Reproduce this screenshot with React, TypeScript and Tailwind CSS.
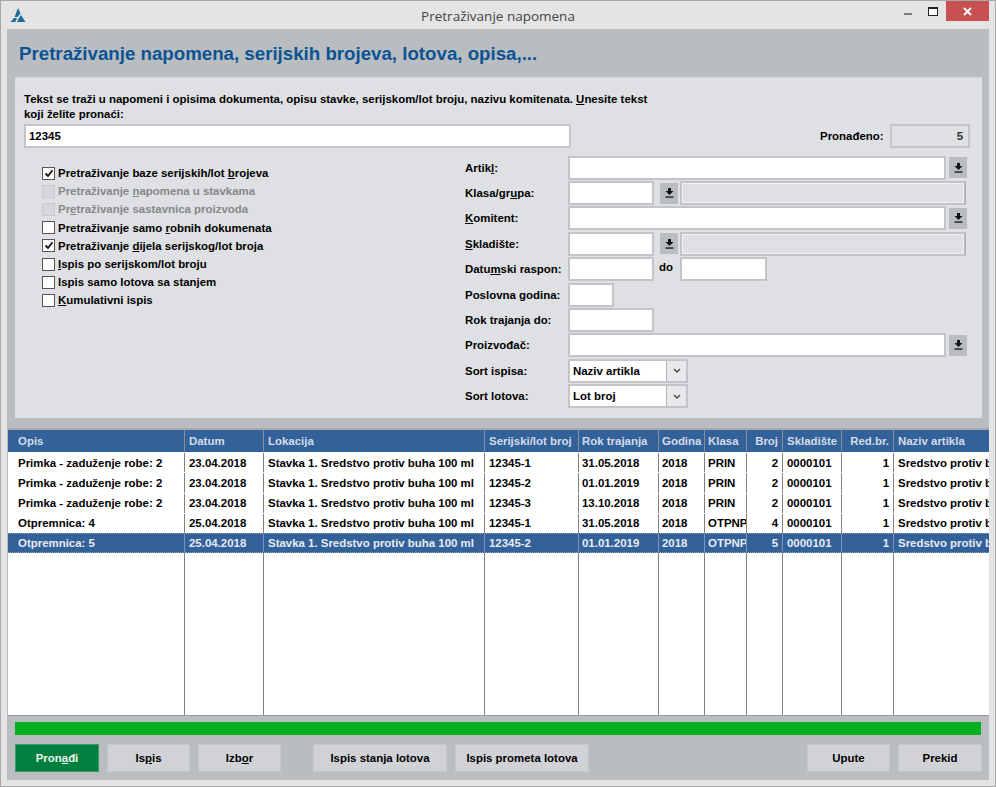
import { ReactNode } from "react";

const columns = [
  { label: "Opis", width: "w-[177px]", pad: "pl-[10px]" },
  { label: "Datum", width: "w-[79px]", pad: "pl-[4px]" },
  { label: "Lokacija", width: "w-[221px]", pad: "pl-[4px]" },
  { label: "Serijski/lot broj", width: "w-[94px]", pad: "pl-[4px]" },
  { label: "Rok trajanja", width: "w-[80px]", pad: "pl-[3px]" },
  { label: "Godina", width: "w-[46px]", pad: "pl-[3px]" },
  { label: "Klasa", width: "w-[42px]", pad: "pl-[3px]" },
  { label: "Broj", width: "w-[36px]", pad: "pr-[4px] justify-end" },
  { label: "Skladište", width: "w-[59px]", pad: "pl-[4px]" },
  { label: "Red.br.", width: "w-[52px]", pad: "pr-[4px] justify-end" },
  { label: "Naziv artikla", width: "w-[95px]", pad: "pl-[4px]" },
];

const rows = [
  ["Primka - zaduženje robe: 2", "23.04.2018", "Stavka 1. Sredstvo protiv buha 100 ml", "12345-1", "31.05.2018", "2018", "PRIN", "2", "0000101", "1", "Sredstvo protiv buha 100 ml"],
  ["Primka - zaduženje robe: 2", "23.04.2018", "Stavka 1. Sredstvo protiv buha 100 ml", "12345-2", "01.01.2019", "2018", "PRIN", "2", "0000101", "1", "Sredstvo protiv buha 100 ml"],
  ["Primka - zaduženje robe: 2", "23.04.2018", "Stavka 1. Sredstvo protiv buha 100 ml", "12345-3", "13.10.2018", "2018", "PRIN", "2", "0000101", "1", "Sredstvo protiv buha 100 ml"],
  ["Otpremnica: 4", "25.04.2018", "Stavka 1. Sredstvo protiv buha 100 ml", "12345-1", "31.05.2018", "2018", "OTPNP", "4", "0000101", "1", "Sredstvo protiv buha 100 ml"],
  ["Otpremnica: 5", "25.04.2018", "Stavka 1. Sredstvo protiv buha 100 ml", "12345-2", "01.01.2019", "2018", "OTPNP", "5", "0000101", "1", "Sredstvo protiv buha 100 ml"],
];

function Logo() {
  return (
    <svg width="16" height="15" viewBox="0 0 16 15">
      <path d="M8 0 L10.5 5.5 L7.5 9 L4.6 9 Z" fill="#1a6a9a" />
      <path d="M4 10 L7 10 L5.2 14 L0.5 14 Z" fill="#1a6a9a" />
      <path d="M11 7 L15.5 14 L7 14 L8.6 10.5 Z" fill="#1a6a9a" />
    </svg>
  );
}

function PickIcon() {
  return (
    <svg width="9" height="10" viewBox="0 0 9 10">
      <path d="M3 0 H6 V3 H8.5 L4.5 7 L0.5 3 H3 Z" fill="#111" />
      <rect x="0.5" y="8.4" width="8" height="1.3" fill="#111" />
    </svg>
  );
}

function PickButton() {
  return (
    <div className="flex h-[21px] w-[18px] shrink-0 items-center justify-center bg-[#b9bdc0]">
      <PickIcon />
    </div>
  );
}

function Field({ width }: { width: string }) {
  return <input readOnly className={`h-[24px] shrink-0 border-2 border-[#c2c4c8] bg-white outline-none ${width}`} />;
}

function ReadOnlyField() {
  return <div className="h-[24px] w-[286px] shrink-0 border-2 border-[#c2c4c8] border-r-[#b4b6ba] bg-[#dfe0e3] shadow-[inset_0_0_0_1px_#f2f2f4]" />;
}

function SelectBox({ value }: { value: string }) {
  return (
    <div className="flex h-[24px] w-[120px] border-2 border-[#c2c4c8] bg-white">
      <span className="flex-1 pl-[3px] leading-[20px] text-black">{value}</span>
      <span className="flex w-[20px] items-center justify-center border-l border-[#b0b2b6] bg-[#e8e9eb]">
        <svg width="8" height="5" viewBox="0 0 8 5">
          <path d="M1 1 L4 4 L7 1" fill="none" stroke="#444" strokeWidth="1.4" />
        </svg>
      </span>
    </div>
  );
}

function FormRow({ label, children }: { label: ReactNode; children: ReactNode }) {
  return (
    <div className="flex h-[25.4px] items-center">
      <label className="w-[103px] shrink-0 whitespace-nowrap text-black">{label}</label>
      <div className="flex items-center">{children}</div>
    </div>
  );
}

function CheckRow({ checked, disabled, children }: { checked?: boolean; disabled?: boolean; children: ReactNode }) {
  return (
    <div className={`flex h-[18.2px] items-center gap-[3px] ${disabled ? "text-[#85878a]" : "text-black"}`}>
      <span
        className={`flex h-[13px] w-[13px] items-center justify-center border ${
          disabled ? "border-[#c8c9cc] bg-[#d6d7da]" : "border-[#555] bg-white"
        }`}
      >
        {checked && (
          <svg width="10" height="9" viewBox="0 0 10 9">
            <path d="M1.5 4.5 L4 7 L8.5 1.2" fill="none" stroke="#111" strokeWidth="1.8" />
          </svg>
        )}
      </span>
      <span className="whitespace-nowrap">{children}</span>
    </div>
  );
}

function FooterButton({ width, primary, children }: { width: string; primary?: boolean; children: ReactNode }) {
  return (
    <button
      className={`h-[28px] shrink-0 border text-center ${width} ${
        primary ? "border-[#3a9a68] bg-[#008040] text-[#e8f4ec]" : "border-[#c4c6ca] bg-[#d0d2d6] text-black"
      }`}
    >
      {children}
    </button>
  );
}

export default function App() {
  return (
    <div className="flex h-[787px] w-[996px] flex-col overflow-hidden border border-[#a8a8a8] bg-[#e4e4e4] text-[11.45px] font-bold leading-[14px] font-['Liberation_Sans',Arial,sans-serif]">
      {/* title bar */}
      <div className="flex h-[28px] shrink-0 items-start">
        <div className="w-[91px] shrink-0 pt-[7px] pl-[9px]">
          <Logo />
        </div>
        <div className="flex-1 pt-[6px] text-center font-['Open_Sans',sans-serif] text-[13.5px] leading-[18px] font-normal text-[#444]">
          Pretraživanje napomena
        </div>
        <div className="flex w-[91px] shrink-0 items-start pr-[6px]">
          <div className="mt-[12px] mr-[16px] h-[2px] w-[8px] bg-[#7c7c7c]" />
          <div className="mt-[6px] mr-[8px] h-[9px] w-[10px] border border-t-2 border-[#222] bg-white" />
          <div className="flex h-[20px] w-[43px] items-center justify-center bg-[#c75050]">
            <svg width="9" height="9" viewBox="0 0 9 9">
              <path d="M1 1 L8 8 M8 1 L1 8" stroke="#fff" strokeWidth="1.8" />
            </svg>
          </div>
        </div>
      </div>

      {/* content */}
      <div className="mx-[6px] flex h-[751px] w-[982px] flex-col bg-[#b9bdc0]">
        <h1 className="flex h-[48px] shrink-0 items-center pt-[2px] pl-[12px] text-[18.7px] font-bold text-[#0b5394]">
          Pretraživanje napomena, serijskih brojeva, lotova, opisa,...
        </h1>

        <div className="mr-[7px] ml-[8px] h-[341px] shrink-0 border-t border-[#d6d8da] bg-[#dfe0e3] pt-[14px] pl-[9px]">
          <p className="w-[630px] leading-[15px] text-black">
            Tekst se traži u napomeni i opisima dokumenta, opisu stavke, serijskom/lot broju, nazivu komitenata. <u>U</u>nesite tekst koji želite pronaći:
          </p>
          <div className="mt-[2px] flex items-center">
            <input
              readOnly
              value="12345"
              className="h-[24px] w-[547px] border-2 border-[#c2c4c8] bg-white pl-[3px] font-bold text-black outline-none"
            />
            <span className="ml-[249px] w-[70px] text-black">Pronađeno:</span>
            <div className="h-[24px] w-[80px] border-2 border-[#c2c4c8] bg-[#dfe0e3] pr-[5px] text-right leading-[20px] text-[#333]">5</div>
          </div>

          <div className="mt-[7px] flex">
            <div className="w-[441px] shrink-0 pt-[9px] pl-[18px]">
              <CheckRow checked>
                Pretraživanje baze serijskih/lot <u>b</u>rojeva
              </CheckRow>
              <CheckRow disabled>
                Pretraživanje <u>n</u>apomena u stavkama
              </CheckRow>
              <CheckRow disabled>
                Pr<u>e</u>traživanje sastavnica proizvoda
              </CheckRow>
              <CheckRow>
                Pretraživanje samo <u>r</u>obnih dokumenata
              </CheckRow>
              <CheckRow checked>
                Pretraživanje <u>d</u>ijela serijskog/lot broja
              </CheckRow>
              <CheckRow>
                <u>I</u>spis po serijskom/lot broju
              </CheckRow>
              <CheckRow>Ispis samo lotova sa stanjem</CheckRow>
              <CheckRow>
                <u>K</u>umulativni ispis
              </CheckRow>
            </div>

            <div className="flex-1">
              <FormRow label={<>Artik<u>l</u>:</>}>
                <Field width="w-[378px]" />
                <div className="ml-[3px]">
                  <PickButton />
                </div>
              </FormRow>
              <FormRow label={<>Klasa/gr<u>u</u>pa:</>}>
                <Field width="w-[86px]" />
                <div className="mx-[6px]">
                  <PickButton />
                </div>
                <div className="-ml-[4px]">
                  <ReadOnlyField />
                </div>
              </FormRow>
              <FormRow label={<><u>K</u>omitent:</>}>
                <Field width="w-[378px]" />
                <div className="ml-[3px]">
                  <PickButton />
                </div>
              </FormRow>
              <FormRow label={<><u>S</u>kladište:</>}>
                <Field width="w-[86px]" />
                <div className="mx-[6px]">
                  <PickButton />
                </div>
                <div className="-ml-[4px]">
                  <ReadOnlyField />
                </div>
              </FormRow>
              <FormRow label={<>Datu<u>m</u>ski raspon:</>}>
                <Field width="w-[86px]" />
                <span className="mr-[8px] ml-[5px] mb-[4px] w-[13px] text-black">do</span>
                <Field width="w-[87px]" />
              </FormRow>
              <FormRow label={<>Poslovna <u>g</u>odina:</>}>
                <Field width="w-[46px]" />
              </FormRow>
              <FormRow label="Rok trajanja do:">
                <Field width="w-[86px]" />
              </FormRow>
              <FormRow label="Proizvođač:">
                <Field width="w-[378px]" />
                <div className="ml-[3px]">
                  <PickButton />
                </div>
              </FormRow>
              <FormRow label="Sort ispisa:">
                <SelectBox value="Naziv artikla" />
              </FormRow>
              <FormRow label="Sort lotova:">
                <SelectBox value="Lot broj" />
              </FormRow>
            </div>
          </div>
        </div>

        {/* results table */}
        <div className="mt-[10px] ml-[1px] flex h-[287px] shrink-0 flex-col overflow-hidden border-t-2 border-[#a6aaae] bg-white">
          <div className="flex h-[22px] shrink-0 bg-[#336199] pb-[1px] text-[#d4dcea]">
            {columns.map((c) => (
              <div key={c.label} className={`flex items-center overflow-hidden whitespace-nowrap border-r border-[#8a8f96] last:border-r-0 ${c.width} ${c.pad}`}>
                {c.label}
              </div>
            ))}
          </div>
          {rows.map((row, i) => {
            const selected = i === rows.length - 1;
            return (
              <div
                key={i}
                className={`flex h-[20.25px] shrink-0 ${
                  selected ? "border-y border-dotted border-[#9aa0a8] bg-[#336199] text-[#e6ebf3]" : "pt-[1px] text-black"
                }`}
              >
                {row.map((cell, j) => (
                  <div
                    key={j}
                    className={`flex items-center overflow-hidden whitespace-nowrap last:border-r-0 ${columns[j].width} ${columns[j].pad} ${
                      selected ? "border-r border-[#7f93b5]" : "border-r border-[#808080]"
                    }`}
                  >
                    {cell}
                  </div>
                ))}
              </div>
            );
          })}
          <div className="flex flex-1">
            {columns.map((c) => (
              <div key={c.label} className={`border-r border-[#808080] last:border-r-0 ${c.width}`} />
            ))}
          </div>
        </div>

        {/* footer */}
        <div className="border-t border-[#9a9da0] px-[8px] pt-[6px]">
          <div className="h-[13px] bg-[#00b020]" />
          <div className="mt-[9px] -mr-[1px] flex gap-[8px]">
            <FooterButton width="w-[84px]" primary>
              Pron<u>a</u>đi
            </FooterButton>
            <FooterButton width="w-[83px]">
              Is<u>p</u>is
            </FooterButton>
            <FooterButton width="w-[83px]">
              Izb<u>o</u>r
            </FooterButton>
            <div className="w-[16px] shrink-0" />
            <FooterButton width="w-[134px]">Ispis stanja lotova</FooterButton>
            <FooterButton width="w-[134px]">Ispis prometa lotova</FooterButton>
            <div className="flex-1" />
            <FooterButton width="w-[83px]">Upute</FooterButton>
            <FooterButton width="w-[84px]">Prekid</FooterButton>
          </div>
        </div>
      </div>
    </div>
  );
}
